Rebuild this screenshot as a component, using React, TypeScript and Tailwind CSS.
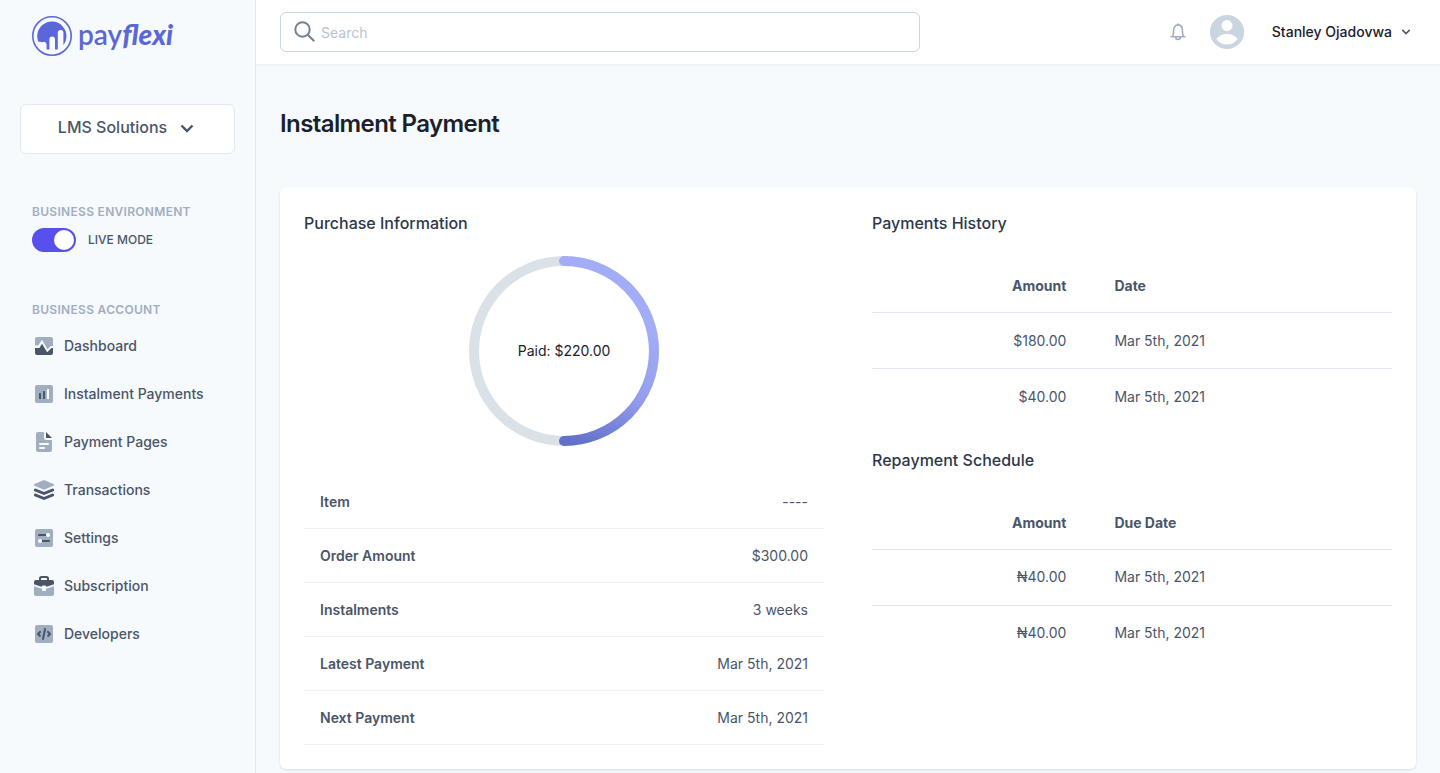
import React, { useState } from "react";

const ICON = "h-6 w-6 shrink-0";

function DashboardIcon() {
  return (
    <svg viewBox="0 0 24 24" className={ICON} aria-hidden="true">
      <path fill="#a0aec0" d="M3 11.600V5c0-1.100.9-2 2-2h14c1.100 0 2 .9 2 2v7h-2.400l-3.100 3.600L10 5.800 6.200 11.600z" />
      <path fill="#4a5568" d="M3 14h4.400l2.600-4.200 5.200 8.400 4.300-4.200H21v5a2 2 0 0 1-2 2H5a2 2 0 0 1-2-2z" />
    </svg>
  );
}

function InstalmentIcon() {
  return (
    <svg viewBox="0 0 24 24" className={ICON} aria-hidden="true">
      <rect x="3" y="3" width="18" height="18" rx="2" fill="#a0aec0" />
      <rect x="7" y="11" width="2" height="6" rx="0.6" fill="#4a5568" />
      <rect x="11" y="9" width="2" height="8" rx="0.6" fill="#4a5568" />
      <rect x="15" y="7" width="2" height="10" rx="0.6" fill="#fff" />
    </svg>
  );
}

function PageIcon() {
  return (
    <svg viewBox="0 0 24 24" className={ICON} aria-hidden="true">
      <path
        fill="#a0aec0"
        d="M6 2h6v6c0 1.100.9 2 2 2h6v10a2 2 0 0 1-2 2H6a2 2 0 0 1-2-2V4c0-1.100.9-2 2-2zm2 11a1 1 0 0 0 0 2h8a1 1 0 0 0 0-2H8zm0 4a1 1 0 0 0 0 2h4a1 1 0 0 0 0-2H8z"
      />
      <path fill="#4a5568" d="M14 2l6 6h-6z" />
    </svg>
  );
}

function LayersIcon() {
  return (
    <svg viewBox="0 0 24 24" className={ICON} aria-hidden="true">
      <path
        fill="#4a5568"
        d="M12 18.880l8.570-3.430c.82.34 1.430.6 1.430.6v2l-10 4-10-4v-2l1.500-.6L12 18.880zm0-5l8.570-3.430L22 11v2l-10 4-10-4v-2l1.500-.55L12 13.880z"
      />
      <path fill="#a0aec0" d="M12 2l10 4.200v1.400L12 11.800 2 7.600V6.200z" />
    </svg>
  );
}

function SettingsIcon() {
  return (
    <svg viewBox="0 0 24 24" className={ICON} aria-hidden="true">
      <rect x="3" y="3" width="18" height="18" rx="2" fill="#a0aec0" />
      <rect x="6" y="8" width="9" height="2" rx="1" fill="#4a5568" />
      <circle cx="16" cy="9" r="2" fill="#fff" />
      <rect x="9" y="14" width="9" height="2" rx="1" fill="#4a5568" />
      <circle cx="8" cy="15" r="2" fill="#fff" />
    </svg>
  );
}

function BriefcaseIcon() {
  return (
    <svg viewBox="0 0 24 24" className={ICON} aria-hidden="true">
      <path
        fill="#4a5568"
        d="M7 6V4.500A2.500 2.500 0 0 1 9.500 2h5A2.500 2.500 0 0 1 17 4.500V6h3a2 2 0 0 1 2 2v2.200l-6.500 2.300H14a1 1 0 0 0-1-1h-2a1 1 0 0 0-1 1H8.500L2 10.200V8a2 2 0 0 1 2-2h3zm2 0h6V5a1 1 0 0 0-1-1h-4a1 1 0 0 0-1 1v1z"
      />
      <path fill="#a0aec0" d="M2 12.200l7 2.400h1V16a1 1 0 0 0 1 1h2a1 1 0 0 0 1-1v-1.400h1l7-2.400V20a2 2 0 0 1-2 2H4a2 2 0 0 1-2-2z" />
    </svg>
  );
}

function CodeIcon() {
  return (
    <svg viewBox="0 0 24 24" className={ICON} aria-hidden="true">
      <rect x="3" y="3" width="18" height="18" rx="2" fill="#a0aec0" />
      <path
        fill="#4a5568"
        d="M8.700 13.300a1 1 0 0 1-1.400 1.400l-2-2a1 1 0 0 1 0-1.400l2-2a1 1 0 1 1 1.400 1.400L7.400 12l1.300 1.300zm6.600 0L16.600 12l-1.300-1.300a1 1 0 1 1 1.400-1.400l2 2a1 1 0 0 1 0 1.400l-2 2a1 1 0 0 1-1.400-1.400zm-3.320 3.900a1 1 0 0 1-1.960-.4l2-10a1 1 0 0 1 1.960.4l-2 10z"
      />
    </svg>
  );
}

function Chevron({ className }: { className: string }) {
  return (
    <svg viewBox="0 0 20 20" fill="currentColor" className={className} aria-hidden="true">
      <path
        fillRule="evenodd"
        clipRule="evenodd"
        d="M5.293 7.293a1 1 0 0 1 1.414 0L10 10.586l3.293-3.293a1 1 0 1 1 1.414 1.414l-4 4a1 1 0 0 1-1.414 0l-4-4a1 1 0 0 1 0-1.414z"
      />
    </svg>
  );
}

function Logo() {
  return (
    <a href="#" aria-label="payflexi" className="flex h-10 items-start gap-1.5 text-[#5b67d9]">
      <svg viewBox="0 0 40 40" className="h-10 w-10 shrink-0" aria-hidden="true">
        <circle cx="20" cy="20" r="19.200" fill="none" stroke="currentColor" strokeWidth="1.600" />
        <path
          fill="currentColor"
          d="M6.500 26A14.600 14.600 0 1 1 31.400 29V16.800a2.800 2.800 0 0 0-5.600 0V33.500h-2.800V23.400a2.800 2.800 0 0 0-5.600 0V33.500h-2.800V28.500a3 3 0 0 0-4.600-2.300C9 25.500 7.500 25.500 6.500 26z"
        />
      </svg>
      <span className="flex items-baseline font-['Lato',sans-serif] text-[28px] leading-9">
        <span className="font-semibold">pay</span>
        <span className="font-black italic">flexi</span>
      </span>
    </a>
  );
}

const NAV = [
  { label: "Dashboard", Icon: DashboardIcon },
  { label: "Instalment Payments", Icon: InstalmentIcon },
  { label: "Payment Pages", Icon: PageIcon },
  { label: "Transactions", Icon: LayersIcon },
  { label: "Settings", Icon: SettingsIcon },
  { label: "Subscription", Icon: BriefcaseIcon },
  { label: "Developers", Icon: CodeIcon },
];

function Sidebar() {
  const [live, setLive] = useState(true);
  return (
    <aside className="flex w-64 shrink-0 flex-col border-r border-[#e2e8f0] pt-4">
      <div className="px-8">
        <Logo />
      </div>
      <div className="mt-12 px-5">
        <button
          type="button"
          className="flex h-[50px] w-full items-center justify-center gap-2.5 rounded-md border border-[#e2e8f0] bg-white pb-1 text-base font-medium text-[#4a5568]"
        >
          LMS Solutions
          <svg viewBox="0 0 20 20" fill="none" className="h-5 w-5" aria-hidden="true">
            <path d="M4.500 8.500l5.500 5.500 5.500-5.500" stroke="currentColor" strokeWidth="2.400" />
          </svg>
        </button>
      </div>
      <div className="mt-12 px-8">
        <h2 className="text-xs leading-5 font-semibold tracking-wide text-[#a0aec0] uppercase">Business Environment</h2>
        <label className="mt-1.5 flex w-fit cursor-pointer items-center gap-3">
          <input type="checkbox" role="switch" checked={live} onChange={() => setLive(!live)} className="peer sr-only" />
          <span className="flex h-6 w-11 justify-start rounded-full bg-[#a0aec0] p-0.5 peer-checked:justify-end peer-checked:bg-[#5850ec]">
            <span className="h-5 w-5 rounded-full bg-white" />
          </span>
          <span className="text-xs font-medium text-[#4a5568]">LIVE MODE</span>
        </label>
      </div>
      <nav className="mt-12 px-8">
        <h2 className="text-xs leading-5 font-semibold tracking-wide text-[#a0aec0] uppercase">Business Account</h2>
        <ul className="mt-3.5 flex flex-col gap-6">
          {NAV.map(({ label, Icon }) => (
            <li key={label}>
              <a href="#" className="flex items-center gap-2 text-sm leading-6 font-medium text-[#4a5568]">
                <Icon />
                {label}
              </a>
            </li>
          ))}
        </ul>
      </nav>
    </aside>
  );
}

function Header() {
  return (
    <header className="flex h-[66px] items-center justify-between border-b-2 border-[#edf2f7] bg-white pr-[26px] pl-6">
      <label className="flex h-10 w-full max-w-[640px] items-center rounded-md border border-[#cbd5e0] px-3 text-[#718096]">
        <span className="hidden">Search</span>
        <svg viewBox="0 0 24 24" fill="none" className="h-6 w-6 shrink-0" aria-hidden="true">
          <circle cx="9.500" cy="9.500" r="7.200" stroke="currentColor" strokeWidth="2" />
          <path d="M14.700 14.700l6.600 6.600" stroke="currentColor" strokeWidth="2" />
        </svg>
        <input
          type="search"
          aria-label="Search"
          placeholder="Search"
          className="ml-1 h-9 min-w-0 flex-1 bg-transparent text-sm text-[#4a5568] outline-none placeholder:text-[#b8c3d2]"
        />
      </label>
      <div className="flex items-center">
        <button type="button" aria-label="Notifications" className="text-[#a0aec0]">
          <svg viewBox="0 0 20 20" fill="none" className="h-5 w-5" aria-hidden="true">
            <path
              d="M2.500 14.800h15M4.300 14.500c1-1 1.300-2.200 1.300-6 0-3.400 1.800-5.600 4.400-5.600s4.400 2.200 4.400 5.600c0 3.800.3 5 1.300 6M7.700 15c0 3.300 4.600 3.300 4.600 0M10 1.500v1.400"
              stroke="currentColor"
              strokeWidth="1.600"
            />
          </svg>
        </button>
        <button type="button" className="ml-5 flex items-center text-sm font-medium text-[#1a202c]">
          <svg viewBox="0 0 20 20" fill="#cbd5e0" className="h-[38px] w-[38px]" aria-hidden="true">
            <path
              fillRule="evenodd"
              clipRule="evenodd"
              d="M10 1a9 9 0 1 1 0 18 9 9 0 0 1 0-18zm0 2.700a2.900 2.900 0 1 0 0 5.800 2.900 2.900 0 0 0 0-5.800zm0 7.300c-2.300 0-4.500.9-5.600 2.700a6.800 6.800 0 0 0 11.200 0C14.500 11.900 12.300 11 10 11z"
            />
          </svg>
          <span className="ml-[26px]">Stanley Ojadovwa</span>
          <Chevron className="ml-1.5 h-4 w-4 text-[#4a5568]" />
        </button>
      </div>
    </header>
  );
}

const SUMMARY = [
  ["Item", "----"],
  ["Order Amount", "$300.00"],
  ["Instalments", "3 weeks"],
  ["Latest Payment", "Mar 5th, 2021"],
  ["Next Payment", "Mar 5th, 2021"],
];

function ProgressRing() {
  return (
    <div className="grid place-items-center">
      <svg viewBox="0 0 190 190" className="col-start-1 row-start-1 h-[190px] w-[190px]" aria-hidden="true">
        <defs>
          <linearGradient id="ring" gradientUnits="userSpaceOnUse" x1="145" y1="60" x2="100" y2="185">
            <stop offset="0" stopColor="#a3acf7" />
            <stop offset="0.5" stopColor="#969fee" />
            <stop offset="1" stopColor="#6270ca" />
          </linearGradient>
        </defs>
        <circle cx="95" cy="95" r="90" fill="none" stroke="#dae1e7" strokeWidth="10" />
        <path d="M95 5a90 90 0 0 1 0 180" fill="none" stroke="url(#ring)" strokeWidth="10" strokeLinecap="round" />
      </svg>
      <span className="col-start-1 row-start-1 text-sm text-[#1a202c]">Paid: $220.00</span>
    </div>
  );
}

function ScheduleTable({ dateLabel, rows }: { dateLabel: string; rows: string[][] }) {
  return (
    <table className="mt-[25px] w-full text-sm leading-5 text-[#4a5568]">
      <thead>
        <tr className="border-b border-[#e2e8f0]">
          <th className="w-[42%] px-6 py-4 text-right font-bold">Amount</th>
          <th className="px-6 py-4 text-left font-bold">{dateLabel}</th>
        </tr>
      </thead>
      <tbody>
        {rows.map(([amount, date], i) => (
          <tr key={i} className="h-14 border-b border-[#e2e8f0] last:border-b-0">
            <td className="px-6 text-right">{amount}</td>
            <td className="px-6">{date}</td>
          </tr>
        ))}
      </tbody>
    </table>
  );
}

export default function App() {
  return (
    <div className="flex min-h-screen bg-[#f7fafc] font-['Inter',sans-serif] antialiased">
      <Sidebar />
      <div className="flex min-w-0 flex-1 flex-col">
        <Header />
        <main className="px-6 pt-10 pb-1">
          <h1 className="text-2xl leading-9 font-semibold tracking-tight text-[#1a202c]">Instalment Payment</h1>
          <section className="mt-[45px] grid grid-cols-2 gap-12 rounded-md bg-white p-6 shadow">
            <div>
              <h2 className="text-base font-medium text-[#2d3748]">Purchase Information</h2>
              <div className="mt-[21px]">
                <ProgressRing />
              </div>
              <dl className="mt-[29px] text-sm text-[#4a5568]">
                {SUMMARY.map(([term, value]) => (
                  <div key={term} className="flex h-[54px] items-center justify-between border-b border-[#edf2f7] px-4">
                    <dt className="font-semibold">{term}</dt>
                    <dd>{value}</dd>
                  </div>
                ))}
              </dl>
            </div>
            <div>
              <h2 className="text-base font-medium text-[#2d3748]">Payments History</h2>
              <ScheduleTable
                dateLabel="Date"
                rows={[
                  ["$180.00", "Mar 5th, 2021"],
                  ["$40.00", "Mar 5th, 2021"],
                ]}
              />
              <h2 className="mt-[23px] text-base font-medium text-[#2d3748]">Repayment Schedule</h2>
              <ScheduleTable
                dateLabel="Due Date"
                rows={[
                  ["₦40.00", "Mar 5th, 2021"],
                  ["₦40.00", "Mar 5th, 2021"],
                ]}
              />
            </div>
          </section>
        </main>
      </div>
    </div>
  );
}
